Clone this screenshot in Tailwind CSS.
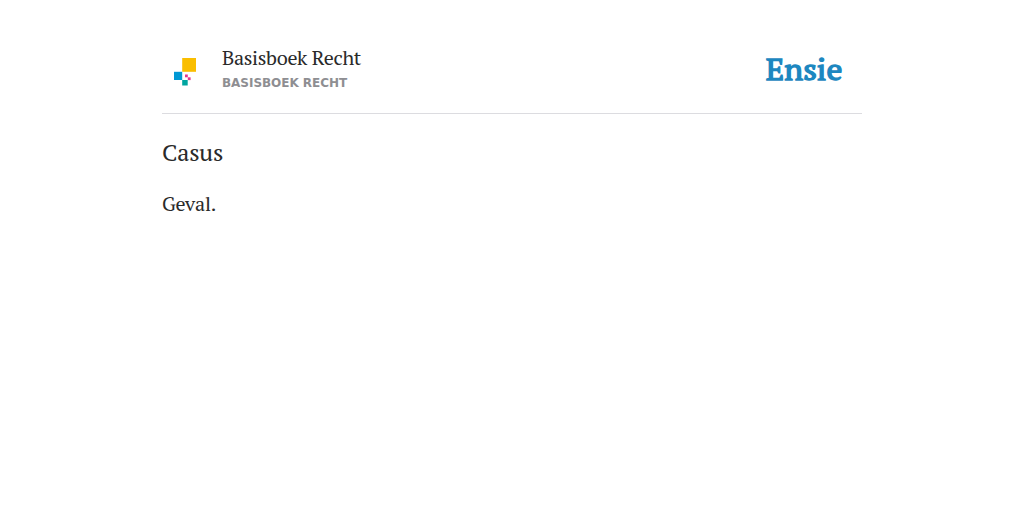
<!DOCTYPE html>
<html lang="nl">
<head>
  <meta charset="UTF-8">
  <meta name="viewport" content="width=device-width, initial-scale=1.0">
  <title>Casus - Basisboek Recht</title>
  <script src="https://cdn.jsdelivr.net/npm/@tailwindcss/browser@4"></script>
</head>
<body class="bg-white min-h-screen text-[#2a2a2a] font-['PT_Serif','Liberation_Serif',serif]">
  <div class="w-[700px] mx-auto">
    <!-- Header -->
    <header class="flex items-start h-[114px] border-b border-[#dcdce0]">
      <svg class="w-[60px] h-[113px]" viewBox="0 0 60 113" role="img" aria-label="Basisboek Recht">
        <rect x="20.2" y="58" width="13.8" height="13.8" fill="#fabe00"/>
        <rect x="12" y="71.8" width="8.2" height="8.2" fill="#0098d4"/>
        <rect x="20.2" y="80" width="5.5" height="5.5" fill="#00a5a0"/>
        <rect x="23" y="74.5" width="2.8" height="2.8" fill="#e5358e"/>
        <rect x="25.8" y="77.3" width="2.8" height="2.8" fill="#e5358e"/>
      </svg>
      <div class="pt-[45px]">
        <h2 class="text-[20px] leading-[26px] tracking-[-0.33px]">Basisboek Recht</h2>
        <p class="mt-1 font-['DejaVu_Sans',sans-serif] text-[12px] leading-[16px] tracking-[-0.04px] font-bold text-[#8e8e92]">BASISBOEK RECHT</p>
      </div>
      <svg class="ml-auto w-[100px] h-[110px]" viewBox="0 0 100 110" role="img" aria-label="Ensie">
        <text x="3.8" y="80.3" textLength="76.6" lengthAdjust="spacingAndGlyphs" font-family="PT Serif, Liberation Serif, serif" font-size="30" fill="#1c87c0" stroke="#1c87c0" stroke-width="1.3">Ensie</text>
      </svg>
    </header>

    <!-- Definition -->
    <main>
      <h1 class="mt-[22px] text-[24px] leading-[32px] tracking-[-0.2px]">Casus</h1>
      <p class="mt-[23px] text-[20px] leading-[26px] tracking-[-0.2px]">Geval.</p>
    </main>
  </div>
</body>
</html>
